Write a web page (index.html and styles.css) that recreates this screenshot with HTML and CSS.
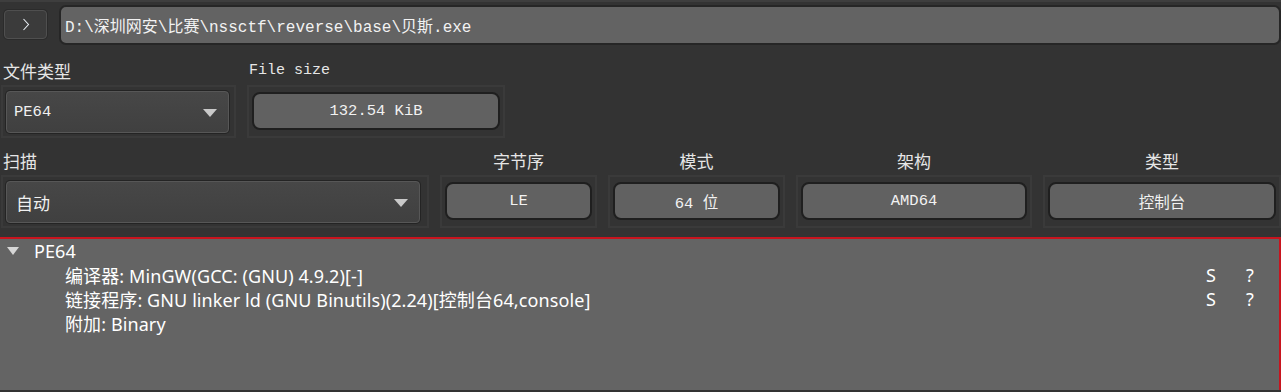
FILE: index.html
```html
<!DOCTYPE html>
<html lang="zh-CN">
<head>
<meta charset="utf-8">
<title>Detect It Easy</title>
<link rel="stylesheet" href="styles.css">
</head>
<body>
<div class="topbar">
  <div class="go">
    <svg width="8" height="13" viewBox="0 0 8 13"><polyline points="1.5,1 6.5,6.5 1.5,12" fill="none" stroke="#e8eef4" stroke-width="1.1"/></svg>
  </div>
  <div class="path">D:\深圳网安\比赛\nssctf\reverse\base\贝斯.exe</div>
</div>

<div class="row">
  <div class="group g-ftype">
    <div class="label">文件类型</div>
    <div class="frame fr-combo">
      <div class="combo c-ftype"><span class="ctext">PE64</span><i class="arrow"></i></div>
    </div>
  </div>
  <div class="group g-fsize">
    <div class="label mono">File size</div>
    <div class="frame fr-btn">
      <div class="btn b-fsize">132.54 KiB</div>
    </div>
  </div>
</div>

<div class="row">
  <div class="group g-scan">
    <div class="label">扫描</div>
    <div class="frame fr-combo">
      <div class="combo c-scan"><span class="ctext cjk">自动</span><i class="arrow"></i></div>
    </div>
  </div>
  <div class="group g-le">
    <div class="label center">字节序</div>
    <div class="frame fr-btn"><div class="btn">LE</div></div>
  </div>
  <div class="group g-mode">
    <div class="label center">模式</div>
    <div class="frame fr-btn"><div class="btn">64 位</div></div>
  </div>
  <div class="group g-arch">
    <div class="label center">架构</div>
    <div class="frame fr-btn"><div class="btn">AMD64</div></div>
  </div>
  <div class="group g-kind">
    <div class="label center">类型</div>
    <div class="frame fr-btn"><div class="btn">控制台</div></div>
  </div>
</div>

<div class="tree">
  <div class="node"><i class="tri"></i><span>PE64</span></div>
  <div class="leaf"><span class="name">编译器: MinGW(GCC: (GNU) 4.9.2)[-]</span><span class="cs">S</span><span class="cq">?</span></div>
  <div class="leaf"><span class="name">链接程序: GNU linker ld (GNU Binutils)(2.24)[控制台64,console]</span><span class="cs">S</span><span class="cq">?</span></div>
  <div class="leaf"><span class="name">附加: Binary</span><span class="cs"></span><span class="cq"></span></div>
</div>
</body>
</html>
```

FILE: styles.css
```css
html, body {
  margin: 0;
  padding: 0;
  background: #333333;
  height: 100%;
  overflow: hidden;
}
body {
  width: 1281px;
  color: #ececec;
  font-family: "Noto Sans CJK SC", sans-serif;
}

.topbar {
  border-top: 2px solid #3e3e3e;
  height: 48px;
  box-sizing: border-box;
  display: flex;
  align-items: flex-start;
}
.go {
  margin-left: 4px;
  margin-top: 8px;
  width: 43px;
  height: 29px;
  box-sizing: border-box;
  background: #3b3b3b;
  border: 1px solid #4f4f4f;
  border-radius: 4px;
  box-shadow: 0 0 0 1px #2b2b2b;
  display: flex;
  align-items: center;
  justify-content: center;
}
.path {
  margin-left: 12px;
  margin-top: 3px;
  flex: 1;
  height: 40px;
  box-sizing: border-box;
  background: #636363;
  border: 2px solid #262626;
  border-radius: 7px;
  padding-left: 4px;
  display: flex;
  align-items: center;
  font-family: "Liberation Mono", "Noto Sans CJK SC", monospace;
  font-size: 16px;
  color: #f2f2f2;
  white-space: nowrap;
}

.row {
  display: flex;
  gap: 11px;
  padding-top: 8px;
}
.group {
  display: flex;
  flex-direction: column;
}
.label {
  height: 29px;
  line-height: 29px;
  padding-left: 2px;
  font-size: 17px;
  color: #e6e6e6;
  white-space: nowrap;
}
.label.center {
  text-align: center;
  padding-left: 0;
}
.label.mono {
  font-family: "Liberation Mono", monospace;
  font-size: 15px;
}
.frame {
  height: 53px;
  box-sizing: border-box;
  border: 2px solid #3a3a3a;
  display: flex;
  align-items: flex-start;
}
.fr-combo {
  padding: 3px 0 0 2px;
}
.fr-btn {
  padding: 5px 3px 0 3px;
}

.g-ftype { width: 235px; margin-left: 1px; }
.g-fsize { width: 258px; }
.g-scan { width: 428px; margin-left: 1px; }
.g-le { width: 157px; }
.g-mode { width: 177px; }
.g-arch { width: 236px; }
.g-kind { width: 238px; }

.combo {
  height: 42px;
  box-sizing: border-box;
  border: 1px solid #575757;
  border-radius: 4px;
  box-shadow: 0 0 0 1px #242424;
  background: linear-gradient(#474747, #404040);
  display: flex;
  align-items: center;
  padding-left: 7px;
  padding-right: 11px;
  margin-top: 1px;
  margin-left: 1px;
}
.c-ftype { width: 223px; }
.c-scan { width: 414px; padding-left: 9px; }
.ctext {
  flex: 1;
  font-family: "Liberation Mono", monospace;
  font-size: 15.5px;
  color: #f0f0f0;
}
.ctext.cjk {
  font-family: "Noto Sans CJK SC", sans-serif;
  font-size: 17px;
}
.arrow {
  width: 0;
  height: 0;
  border-left: 7.5px solid transparent;
  border-right: 7.5px solid transparent;
  border-top: 8px solid #c9c9c9;
  margin-top: 1px;
}

.btn {
  flex: 1;
  height: 38px;
  box-sizing: border-box;
  background: #616161;
  border: 2px solid #1f1f1f;
  border-radius: 8px;
  display: flex;
  align-items: center;
  justify-content: center;
  font-family: "Liberation Mono", "Noto Sans CJK SC", monospace;
  font-size: 15.5px;
  color: #f2f2f2;
  white-space: nowrap;
}

.tree {
  margin-top: 9px;
  height: 153px;
  box-sizing: border-box;
  background: #646464;
  border-top: 2px solid #c8141e;
  border-right: 2px solid #c8141e;
  font-family: "Noto Sans", "Noto Sans CJK SC", sans-serif;
  font-size: 18px;
  letter-spacing: 0.1px;
  color: #ffffff;
}
.node {
  height: 24px;
  display: flex;
  align-items: center;
  padding-left: 7px;
}
.tri {
  width: 0;
  height: 0;
  border-left: 6.5px solid transparent;
  border-right: 6.5px solid transparent;
  border-top: 8px solid #d6d6d6;
  margin-right: 15px;
}
.leaf {
  height: 24px;
  display: flex;
  align-items: center;
  padding-left: 65px;
  white-space: nowrap;
}
.leaf .name { flex: 1; }
.leaf .cs { width: 40px; }
.leaf .cq { width: 33px; }
```
